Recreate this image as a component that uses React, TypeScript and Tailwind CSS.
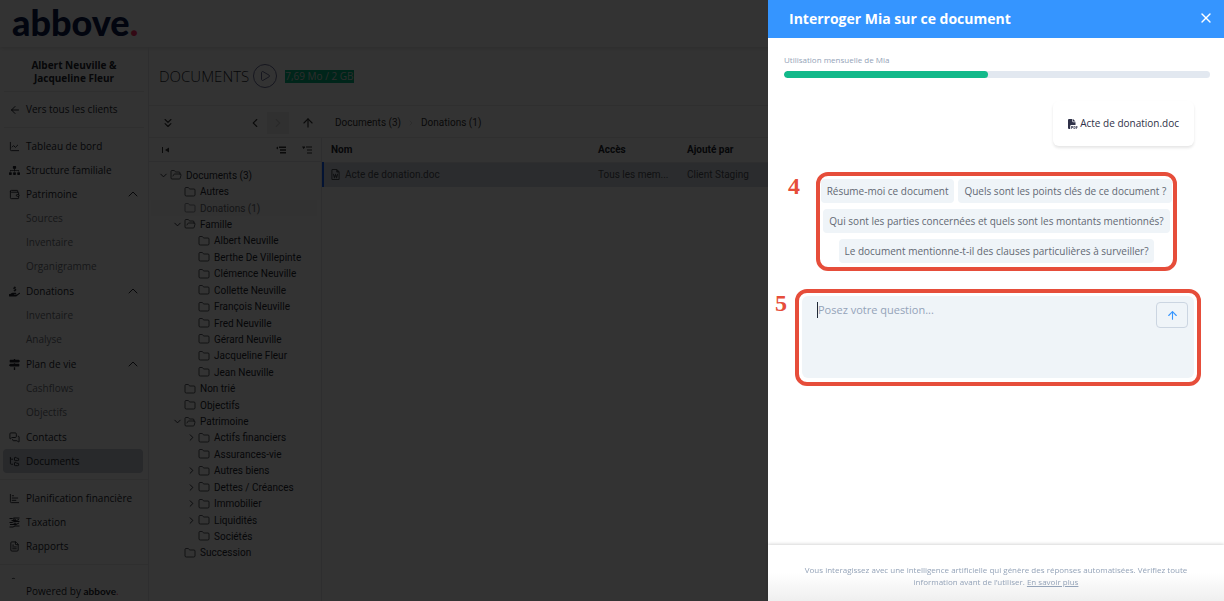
import { useState } from 'react'
import type { ComponentType, ReactNode } from 'react'
import {
  ArrowLeft,
  ArrowUp,
  ChartBar,
  ChartLine,
  ChevronDown,
  ChevronLeft,
  ChevronRight,
  ChevronUp,
  ChevronsDown,
  FileText,
  Folder,
  FolderOpen,
  FolderTree,
  MessagesSquare,
  Play,
  User,
  Wallet,
  X,
} from 'lucide-react'
import { FaHandHoldingUsd, FaMapSigns, FaSitemap } from 'react-icons/fa'
import { FaFilePdf, FaRegFileWord } from 'react-icons/fa6'

type IconType = ComponentType<{ size?: number; className?: string }>

type NavItem = {
  label: string
  icon: IconType
  active?: boolean
  children?: string[]
}

type TreeNode = {
  label: string
  level: number
  state?: 'open' | 'closed'
  active?: boolean
}

function TaxIcon({ size = 11, className }: { size?: number; className?: string }) {
  return (
    <svg
      width={size}
      height={size}
      viewBox="0 0 22 22"
      fill="none"
      stroke="currentColor"
      strokeWidth="2"
      className={className}
    >
      <path d="M1 3h6l3-1h11M5 7h10l5-2M1 11h5l4-2h11M2 15h12l6-3M1 20h7l4-2h9" />
      <circle cx="11" cy="6" r="2" />
      <circle cx="12" cy="14" r="2" />
    </svg>
  )
}

const mainNav: NavItem[] = [
  { label: 'Tableau de bord', icon: ChartLine },
  { label: 'Structure familiale', icon: FaSitemap },
  { label: 'Patrimoine', icon: Wallet, children: ['Sources', 'Inventaire', 'Organigramme'] },
  { label: 'Donations', icon: FaHandHoldingUsd, children: ['Inventaire', 'Analyse'] },
  { label: 'Plan de vie', icon: FaMapSigns, children: ['Cashflows', 'Objectifs'] },
  { label: 'Contacts', icon: MessagesSquare },
  { label: 'Documents', icon: FolderTree, active: true },
]

const secondaryNav: NavItem[] = [
  { label: 'Planification financière', icon: ChartBar },
  { label: 'Taxation', icon: TaxIcon },
  { label: 'Rapports', icon: FileText },
]

const tree: TreeNode[] = [
  { label: 'Documents (3)', level: 0, state: 'open' },
  { label: 'Autres', level: 1 },
  { label: 'Donations (1)', level: 1, active: true },
  { label: 'Famille', level: 1, state: 'open' },
  { label: 'Albert Neuville', level: 2 },
  { label: 'Berthe De Villepinte', level: 2 },
  { label: 'Clémence Neuville', level: 2 },
  { label: 'Collette Neuville', level: 2 },
  { label: 'François Neuville', level: 2 },
  { label: 'Fred Neuville', level: 2 },
  { label: 'Gérard Neuville', level: 2 },
  { label: 'Jacqueline Fleur', level: 2 },
  { label: 'Jean Neuville', level: 2 },
  { label: 'Non trié', level: 1 },
  { label: 'Objectifs', level: 1 },
  { label: 'Patrimoine', level: 1, state: 'open' },
  { label: 'Actifs financiers', level: 2, state: 'closed' },
  { label: 'Assurances-vie', level: 2 },
  { label: 'Autres biens', level: 2, state: 'closed' },
  { label: 'Dettes / Créances', level: 2, state: 'closed' },
  { label: 'Immobilier', level: 2, state: 'closed' },
  { label: 'Liquidités', level: 2, state: 'closed' },
  { label: 'Sociétés', level: 2 },
  { label: 'Succession', level: 1 },
]

const levelPadding = ['pl-[7px]', 'pl-[21px]', 'pl-[35px]']

const suggestions = [
  'Résume-moi ce document',
  'Quels sont les points clés de ce document ?',
  'Qui sont les parties concernées et quels sont les montants mentionnés?',
  'Le document mentionne-t-il des clauses particulières à surveiller?',
]

function NavGroup({ item }: { item: NavItem }) {
  const Icon = item.icon

  return (
    <li className={item.children ? 'mb-px' : ''}>
      <a
        href="#"
        className={`mr-[5px] ml-[3px] flex h-6 items-center gap-1.5 rounded pr-0.5 pl-1.5 ${item.active ? 'bg-[#c6cbd4]' : ''}`}
      >
        <Icon size={11} className="shrink-0" />
        <span className="flex-1 whitespace-nowrap">{item.label}</span>
        {item.children && <ChevronUp size={16} strokeWidth={1.5} />}
      </a>
      {item.children && (
        <ul>
          {item.children.map((child) => (
            <li key={child}>
              <a href="#" className="flex h-6 items-center pl-[26px] text-[#70747c]">
                {child}
              </a>
            </li>
          ))}
        </ul>
      )}
    </li>
  )
}

function Sidebar() {
  return (
    <nav className="flex w-[149px] shrink-0 flex-col border-r border-[#e4e6e8] text-[10px] leading-[13px]">
      <p className="mx-1 border-b border-[#e9eaec] px-6 pt-3 pb-1.5 text-center font-bold whitespace-nowrap">
        Albert Neuville &amp;
        <br />
        Jacqueline Fleur
      </p>
      <a href="#" className="mx-1 flex h-9 items-center gap-[5px] border-b border-[#e9eaec] pl-[5px]">
        <ArrowLeft size={12} />
        Vers tous les clients
      </a>
      <div className="min-h-0 flex-1 overflow-hidden">
        <ul className="border-b border-[#e9eaec] py-1.5">
          {mainNav.map((item) => (
            <NavGroup key={item.label} item={item} />
          ))}
        </ul>
        <ul className="border-b border-[#e9eaec] py-1.5">
          {secondaryNav.map((item) => (
            <NavGroup key={item.label} item={item} />
          ))}
        </ul>
        <User size={11} className="mt-3 ml-2" />
      </div>
      <p className="h-[22px] pl-[26px] leading-6">
        Powered by <span className="font-['Lato',sans-serif] font-bold">abbove</span>
        <span className="text-[#ff2e63]">.</span>
      </p>
    </nav>
  )
}

function FolderPanel() {
  return (
    <div className="flex w-[173px] shrink-0 flex-col border-r border-[#e4e6e8]">
      <div className="flex h-6 shrink-0 items-center border-b border-[#e4e6e8] pr-2 pl-3 text-[#333333]">
        <button type="button" aria-label="Réduire le panneau" className="flex-1">
          <svg width="10" height="10" viewBox="0 0 10 10" fill="currentColor">
            <path d="M1 2h1v6H1zM8 2.500v5L4 5z" />
          </svg>
        </button>
        <button type="button" aria-label="Replier tout" className="mr-3.5">
          <svg width="12" height="10" viewBox="0 0 12 10" fill="currentColor">
            <path d="M1 3l2-1.500V4.500zM4 1.500h7V3H4zM5 4.300h6v1.500H5zM5 7h6v1.500H5z" />
          </svg>
        </button>
        <button type="button" aria-label="Déplier tout">
          <svg width="12" height="10" viewBox="0 0 12 10" fill="currentColor">
            <path d="M1 1.500h3v1L2.500 4zM5 1.500h6v1H5zM6 4.500h5v1H6zM6 7.500h5v1H6z" />
          </svg>
        </button>
      </div>
      <ul className="flex min-h-0 flex-1 flex-col pt-[5px] pb-10">
        {tree.map((node) => {
          const FolderIcon = node.state === 'open' ? FolderOpen : Folder
          return (
            <li
              key={`${node.level}-${node.label}`}
              className={`mr-1 ml-0.5 flex flex-1 items-center whitespace-nowrap ${levelPadding[node.level]} ${node.active ? 'bg-[#f8f8f9] text-[#666a70]' : ''}`}
            >
              <span className="w-3 shrink-0">
                {node.state === 'open' && <ChevronDown size={11} />}
                {node.state === 'closed' && <ChevronRight size={11} />}
              </span>
              <FolderIcon size={12} strokeWidth={1.5} className="mr-1 shrink-0" />
              {node.label}
            </li>
          )
        })}
      </ul>
    </div>
  )
}

function DocumentsPage() {
  return (
    <main className="flex min-w-0 flex-1 flex-col">
      <div className="flex h-[59px] shrink-0 items-center border-b border-[#e9eaec] pl-2.5">
        <h1 className="text-[15px] font-light">DOCUMENTS</h1>
        <button
          type="button"
          aria-label="Lire la vidéo"
          className="mr-2 ml-1 flex size-6 items-center justify-center rounded-full border border-[#6d6f99] text-[#6d6f99]"
        >
          <Play size={12} />
        </button>
        <span className="bg-[#00b981] text-[10px] leading-[13px] text-[#dddddd]">7,69 Mo / 2 GB</span>
      </div>
      <div className="flex min-h-0 flex-1 flex-col font-['Roboto',sans-serif] text-[10px]">
        <div className="flex h-8 shrink-0 items-center border-b border-[#e9eaec] pt-0.5 text-[#333333]">
          <button type="button" aria-label="Tout afficher" className="ml-3">
            <ChevronsDown size={14} />
          </button>
          <div className="ml-[69px] flex items-center">
            <button type="button" aria-label="Précédent" className="mr-px p-1">
              <ChevronLeft size={14} />
            </button>
            <button type="button" aria-label="Suivant" className="mr-3 bg-[#f0f0f0] p-1 text-[#cccccc]">
              <ChevronRight size={14} />
            </button>
            <button type="button" aria-label="Dossier parent">
              <ArrowUp size={14} />
            </button>
          </div>
          <a href="#" className="ml-5">
            Documents (3)
          </a>
          <ChevronRight size={8} className="mx-1.5 text-[#cccccc]" />
          <a href="#">Donations (1)</a>
        </div>
        <div className="flex min-h-0 flex-1">
          <FolderPanel />
          <div className="min-w-0 flex-1">
            <table className="w-full min-w-[902px] table-fixed text-left">
              <thead>
                <tr className="h-6 border-b border-[#e4e6e8]">
                  <th className="w-[267px] pl-2 font-bold">Nom</th>
                  <th className="w-[89px] pl-2 font-bold">Accès</th>
                  <th className="pl-2 font-bold">Ajouté par</th>
                </tr>
              </thead>
              <tbody>
                <tr className="h-[25px] bg-[#d7dde5] text-[#50545c]">
                  <td className="border-l-2 border-[#0f62fe] pl-1.5">
                    <span className="flex items-center gap-1">
                      <FaRegFileWord size={11} />
                      Acte de donation.doc
                    </span>
                  </td>
                  <td className="pl-2">Tous les mem...</td>
                  <td className="pl-2">Client Staging</td>
                </tr>
              </tbody>
            </table>
          </div>
        </div>
      </div>
    </main>
  )
}

function Callout({ number, className, children }: { number: number; className: string; children: ReactNode }) {
  return (
    <div className={`flex ${className}`}>
      <span className="font-['Liberation_Serif',serif] text-2xl leading-7 font-bold text-[#e64d3a]">{number}</span>
      <div className="min-w-0 flex-1 rounded-xl border-4 border-[#e64d3a]">{children}</div>
    </div>
  )
}

function MiaDrawer() {
  const [question, setQuestion] = useState('')

  return (
    <aside className="fixed inset-y-0 right-0 flex w-[456px] max-w-full flex-col bg-white">
      <header className="flex h-[38px] shrink-0 items-center justify-between bg-[#3595ff] pr-2.5 pb-0.5 pl-[21px] text-white">
        <h2 className="text-[14px] font-bold">Interroger Mia sur ce document</h2>
        <button type="button" aria-label="Fermer">
          <X size={16} />
        </button>
      </header>

      <div className="min-h-0 flex-1">
        <div className="pt-4 pr-3.5 pl-4">
          <p className="text-[8px] leading-3 text-[#94a3b8]">Utilisation mensuelle de Mia</p>
          <div className="mt-[5px] h-[7px] overflow-hidden rounded-full bg-[#e2e8f0]">
            <div className="h-full w-[48%] rounded-full bg-[#12b98a]" />
          </div>
        </div>

        <div className="mt-[23px] mr-[30px] flex justify-end">
          <p className="flex h-[45px] items-center gap-0.5 rounded-md px-[15px] text-[10px] text-[#2f3148] shadow-[0_2px_3px_rgba(0,0,0,0.1)]">
            <FaFilePdf size={10} />
            Acte de donation.doc
          </p>
        </div>

        <Callout number={4} className="mt-[26px] gap-4 pr-[47px] pl-5">
          <div className="flex flex-wrap justify-center gap-x-1 gap-y-1.5 pt-[3px] pb-1">
            {suggestions.map((suggestion) => (
              <button
                key={suggestion}
                type="button"
                onClick={() => setQuestion(suggestion)}
                className="h-6 rounded-sm bg-[#eff4f8] px-1.5 text-[10px] whitespace-nowrap text-[#626873]"
              >
                {suggestion}
              </button>
            ))}
          </div>
        </Callout>

        <Callout number={5} className="mt-[18px] gap-2 pr-[23px] pl-[7px]">
          <form className="mx-[3px] mt-[3px] mb-1 flex h-[82px] items-start rounded-md bg-[#eff4f8] py-1.5 pr-1.5 pl-[15px]">
            <span className="h-4 w-px bg-[#1f2937]" />
            <textarea
              aria-label="Posez votre question"
              placeholder="Posez votre question..."
              value={question}
              onChange={(event) => setQuestion(event.target.value)}
              className="h-full min-w-0 flex-1 resize-none bg-transparent text-[11px] leading-4 text-[#1f2937] outline-none placeholder:text-[#94a3b8]"
            />
            <button
              type="submit"
              aria-label="Envoyer"
              className="flex h-[26px] w-8 items-center justify-center rounded border border-[#cbd5e1] text-[#3595ff]"
            >
              <ArrowUp size={13} />
            </button>
          </form>
        </Callout>
      </div>

      <footer className="h-14 shrink-0 bg-linear-to-b from-white from-50% to-[#efefef] px-7 pt-[19px] text-center text-[8px] leading-3 text-[#94a3b8] shadow-[0_-1px_3px_rgba(0,0,0,0.16)]">
        Vous interagissez avec une intelligence artificielle qui génère des réponses automatisées. Vérifiez toute
        information avant de l’utiliser.{' '}
        <a href="#" className="underline">
          En savoir plus
        </a>
      </footer>
    </aside>
  )
}

export default function App() {
  return (
    <div className="h-screen overflow-hidden bg-white font-['Open_Sans',sans-serif] text-[#23272f]">
      <div className="flex h-full flex-col">
        <header className="flex h-[47px] shrink-0 items-center pb-1 pl-3 shadow-[0_1px_4px_rgba(0,0,0,0.15)]">
          <p className="font-['Lato',sans-serif] text-[36px] leading-none font-black text-[#0b1a4a]">
            abbove<span className="text-[#ff2e63]">.</span>
          </p>
        </header>
        <div className="flex min-h-0 flex-1">
          <Sidebar />
          <DocumentsPage />
        </div>
      </div>
      <div className="fixed inset-0 bg-black/80" />
      <MiaDrawer />
    </div>
  )
}
